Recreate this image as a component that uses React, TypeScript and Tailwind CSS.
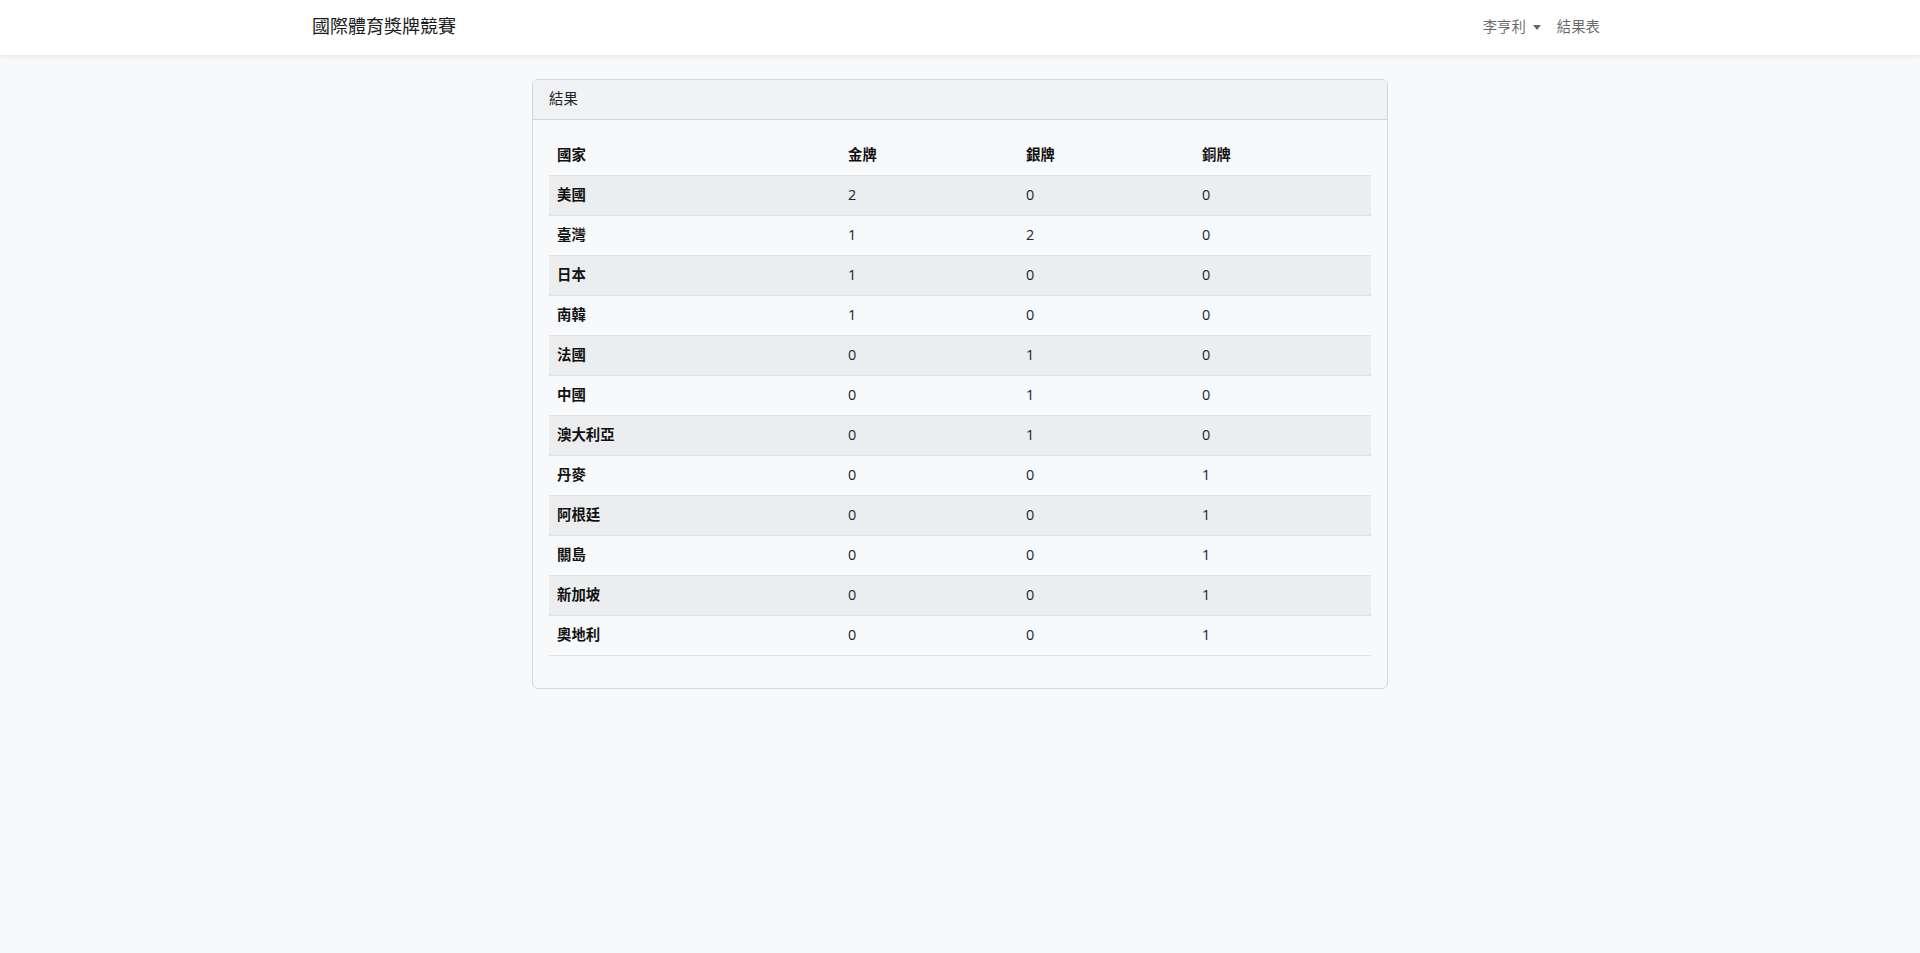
const rows: [string, number, number, number][] = [
  ["美國", 2, 0, 0],
  ["臺灣", 1, 2, 0],
  ["日本", 1, 0, 0],
  ["南韓", 1, 0, 0],
  ["法國", 0, 1, 0],
  ["中國", 0, 1, 0],
  ["澳大利亞", 0, 1, 0],
  ["丹麥", 0, 0, 1],
  ["阿根廷", 0, 0, 1],
  ["關島", 0, 0, 1],
  ["新加坡", 0, 0, 1],
  ["奧地利", 0, 0, 1],
];

const font = "font-['Open_Sans','Noto_Sans_CJK_TC',sans-serif]";

const App = () => {
  return (
    <div className={`min-h-[953px] bg-[#f8f9fa] text-[14.4px] leading-[23px] text-[#212529] ${font}`}>
      <nav className="bg-white shadow-[0_2px_4px_rgba(0,0,0,0.075)] py-2">
        <div className="w-[1320px] mx-auto px-3 flex items-center justify-between">
          <a className="text-[18px] leading-[27px] pt-[5px] pb-[7px] text-[#1a1d20]">國際體育獎牌競賽</a>
          <ul className="flex items-center text-[rgba(0,0,0,0.6)]">
            <li className="px-2 pt-[7px] pb-[9px] flex items-center">
              李亨利
              <span className="ml-[7px] mt-[2px] inline-block w-0 h-0 border-x-[4.5px] border-x-transparent border-t-[5px] border-t-[rgba(0,0,0,0.6)]" />
            </li>
            <li className="px-2 pt-[7px] pb-[9px]">結果表</li>
          </ul>
        </div>
      </nav>

      <main className="py-6">
        <div className="w-[856px] ml-[532px]">
          <div className="rounded-[6px] border border-[#d3d4d5] overflow-hidden">
            <div className="bg-[#f1f2f3] border-b border-[#d3d4d5] px-4 pt-[7px] pb-[9px]">結果</div>
            <div className="p-4">
              <table className="w-full border-collapse mb-4 text-left">
                <thead>
                  <tr className="border-b border-[#dee2e6]">
                    <th className="w-[291px] px-2 pt-[7px] pb-[9px] font-bold text-[#111]">國家</th>
                    <th className="w-[178px] px-2 pt-[7px] pb-[9px] font-bold text-[#111]">金牌</th>
                    <th className="w-[176px] px-2 pt-[7px] pb-[9px] font-bold text-[#111]">銀牌</th>
                    <th className="px-2 pt-[7px] pb-[9px] font-bold text-[#111]">銅牌</th>
                  </tr>
                </thead>
                <tbody>
                  {rows.map(([name, g, s, b], i) => (
                    <tr
                      key={name}
                      className={`border-b border-[#dee2e6] ${i % 2 === 0 ? "bg-[#ecedee]" : ""}`}
                    >
                      <th className="px-2 pt-[7px] pb-[9px] font-bold text-[#111]">{name}</th>
                      <td className="px-2 pt-[7px] pb-[9px]">{g}</td>
                      <td className="px-2 pt-[7px] pb-[9px]">{s}</td>
                      <td className="px-2 pt-[7px] pb-[9px]">{b}</td>
                    </tr>
                  ))}
                </tbody>
              </table>
            </div>
          </div>
        </div>
      </main>
    </div>
  );
};

export default App;
